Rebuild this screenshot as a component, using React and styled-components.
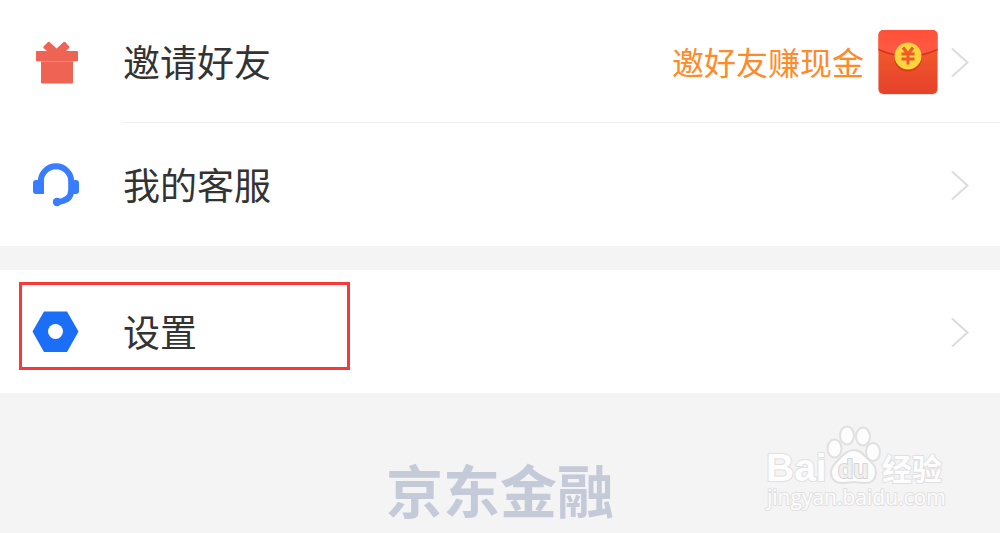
import React from 'react';
import styled, { createGlobalStyle } from 'styled-components';

const GlobalStyle = createGlobalStyle`
  * {
    box-sizing: border-box;
  }

  body {
    margin: 0;
    background: #f4f4f4;
    font-family: "Noto Sans CJK SC", "Noto Sans", sans-serif;
  }
`;

const Group = styled.nav`
  background: #fff;
  margin-bottom: 24px;

  &:last-of-type {
    margin-bottom: 0;
  }
`;

const Row = styled.a`
  position: relative;
  display: flex;
  height: 123px;
  color: #333;
  text-decoration: none;
`;

const IconCell = styled.span`
  display: flex;
  align-items: center;
  width: 123px;
  padding-left: 32px;
`;

const Content = styled.span`
  flex: 1;
  display: flex;
  align-items: center;
  padding-right: 30px;
  box-shadow: ${props => (props.$divider ? 'inset 0 -1px #f0f0f0' : 'none')};
`;

const Label = styled.span`
  flex: 1;
  padding-bottom: 2px;
  font-size: 37px;
  line-height: 48px;
`;

const Promo = styled.span`
  margin-right: 14px;
  padding-bottom: 2px;
  color: #ff8a26;
  font-size: 32px;
  line-height: 48px;
`;

const Envelope = styled.svg`
  margin-right: 12px;
`;

const Highlight = styled.span`
  position: absolute;
  top: 12px;
  left: 19px;
  width: 331px;
  height: 88px;
  border: 3px solid #fb3838;
`;

const Footer = styled.footer`
  position: relative;
  padding: 60px 0 8px;
  text-align: center;
`;

const Brand = styled.strong`
  display: block;
  color: #c4cad8;
  font-size: 57px;
  font-weight: 700;
  line-height: 70px;
`;

const Watermark = styled.svg`
  position: absolute;
  top: 30px;
  right: 50px;
  fill: #fdfdfd;
  stroke: #e0e0e0;
  stroke-width: 2px;
  stroke-linejoin: round;

  text {
    paint-order: stroke;
  }
`;

const GiftIcon = () => (
  <svg width="48" height="48" viewBox="0 0 48 48" fill="#ee6353" aria-hidden="true">
    <path d="M9 23h32v1H9z" fill="#f4988d" />
    <rect x="4" y="13" width="42" height="10.300" rx="1" />
    <path d="M9 24h32v20.500a1 1 0 0 1-1 1H10a1 1 0 0 1-1-1z" />
    <path d="M11.500 8.500l4.500-4.500q.8-.7 1.600 0l7 6.500 7-6.500q.8-.7 1.600 0l4 4.500q.6.700 0 1.400L33 14H16l-4.500-4.100q-.6-.7 0-1.400z" />
  </svg>
);

const HeadsetIcon = () => (
  <svg width="48" height="48" viewBox="0 0 48 48" fill="none" aria-hidden="true">
    <path d="M8.800 30V20.500a15.200 15.200 0 0 1 30.400 0V29q0 11-14.200 12" stroke="#387dff" strokeWidth="6" />
    <path d="M12 18.500H7V19H4a3 3 0 0 0-3 3V30a3 3 0 0 0 3 3h8z" fill="#387dff" />
    <path d="M37 18.500h5V19h2a3 3 0 0 1 3 3V30a3 3 0 0 1-3 3h-6z" fill="#387dff" />
    <circle cx="25" cy="41" r="4.200" fill="#387dff" />
  </svg>
);

const SettingsIcon = () => (
  <svg width="48" height="48" viewBox="0 0 48 48" aria-hidden="true">
    <path d="M12 3.500h23l11.500 20L35 44H12L.5 23.500z" fill="#1b6ff7" />
    <circle cx="23.500" cy="23.500" r="7.500" fill="#fff" />
  </svg>
);

const Chevron = () => (
  <svg width="20" height="32" viewBox="0 0 20 32" fill="none" aria-hidden="true">
    <path d="M2 2.500l15.500 14L2 30.500" stroke="#dcdcdc" strokeWidth="2" />
  </svg>
);

const RedEnvelope = () => (
  <Envelope width="60" height="66" viewBox="0 0 60 66" aria-hidden="true">
    <defs>
      <linearGradient id="envelope-body" x1="0" y1="0" x2="0" y2="1">
        <stop offset="0.300" stopColor="#f25a2c" />
        <stop offset="1" stopColor="#e5412b" />
      </linearGradient>
      <linearGradient id="envelope-flap" x1="0" y1="0" x2="0" y2="1">
        <stop offset="0" stopColor="#ff5037" />
        <stop offset="1" stopColor="#ff5c48" />
      </linearGradient>
    </defs>
    <rect y="1" width="60" height="65" rx="5" fill="#fbe3de" />
    <rect x="0.500" y="1" width="59" height="64" rx="5" fill="url(#envelope-body)" />
    <path d="M.5 20V6a5 5 0 0 1 5-5h49a5 5 0 0 1 5 5v14Q30 34 .5 20z" fill="url(#envelope-flap)" />
    <path d="M.5 20.500Q30 34 59.500 20.500" fill="none" stroke="#d92f1c" strokeWidth="1.500" />
    <circle cx="30" cy="28.500" r="14" fill="#d93a1e" />
    <circle cx="30" cy="27" r="13.500" fill="#ffd43c" />
    <path d="M25 18.500l5 6.500 5-6.500M23.500 25h13M23.500 30h13M30 25v10.500" fill="none" stroke="#ee5a2c" strokeWidth="3" />
  </Envelope>
);

const BaiduWatermark = () => (
  <Watermark width="186" height="94" viewBox="0 0 186 94" role="img" aria-label="Baidu 经验">
    <text x="2" y="58" fontFamily="Liberation Sans, sans-serif" fontSize="39" fontWeight="700">Bai</text>
    <ellipse cx="70.500" cy="25.500" rx="7" ry="9" />
    <ellipse cx="83" cy="12.500" rx="7" ry="9" />
    <ellipse cx="99" cy="13.500" rx="7" ry="9" />
    <ellipse cx="109" cy="29" rx="7" ry="9" />
    <path d="M90 27c6 0 9 4 13 8 5 5 9 8 9 14 0 8-5 11-11 11-5 0-6-1-11-1s-6 1-11 1c-7 0-12-3-12-11 0-5 4-9 8-13 5-5 9-9 15-9z" />
    <text x="74" y="55" fontFamily="Liberation Sans, sans-serif" fontSize="25" fontWeight="700" fill="#f0f0f0" stroke="#d4d4d4">du</text>
    <text x="118" y="57" fontFamily="Noto Sans CJK SC, sans-serif" fontSize="30" fontWeight="700">经验</text>
    <text x="3" y="82" fontFamily="Open Sans, Noto Sans, sans-serif" fontSize="21">jingyan.baidu.com</text>
  </Watermark>
);

const App = () => (
  <>
    <GlobalStyle />
    <main>
      <Group>
        <Row href="#invite">
          <IconCell><GiftIcon /></IconCell>
          <Content $divider>
            <Label>邀请好友</Label>
            <Promo>邀好友赚现金</Promo>
            <RedEnvelope />
            <Chevron />
          </Content>
        </Row>
        <Row href="#service">
          <IconCell><HeadsetIcon /></IconCell>
          <Content>
            <Label>我的客服</Label>
            <Chevron />
          </Content>
        </Row>
      </Group>
      <Group>
        <Row href="#settings">
          <IconCell><SettingsIcon /></IconCell>
          <Content>
            <Label>设置</Label>
            <Chevron />
          </Content>
          <Highlight />
        </Row>
      </Group>
    </main>
    <Footer>
      <Brand>京东金融</Brand>
      <BaiduWatermark />
    </Footer>
  </>
);

export default App;
